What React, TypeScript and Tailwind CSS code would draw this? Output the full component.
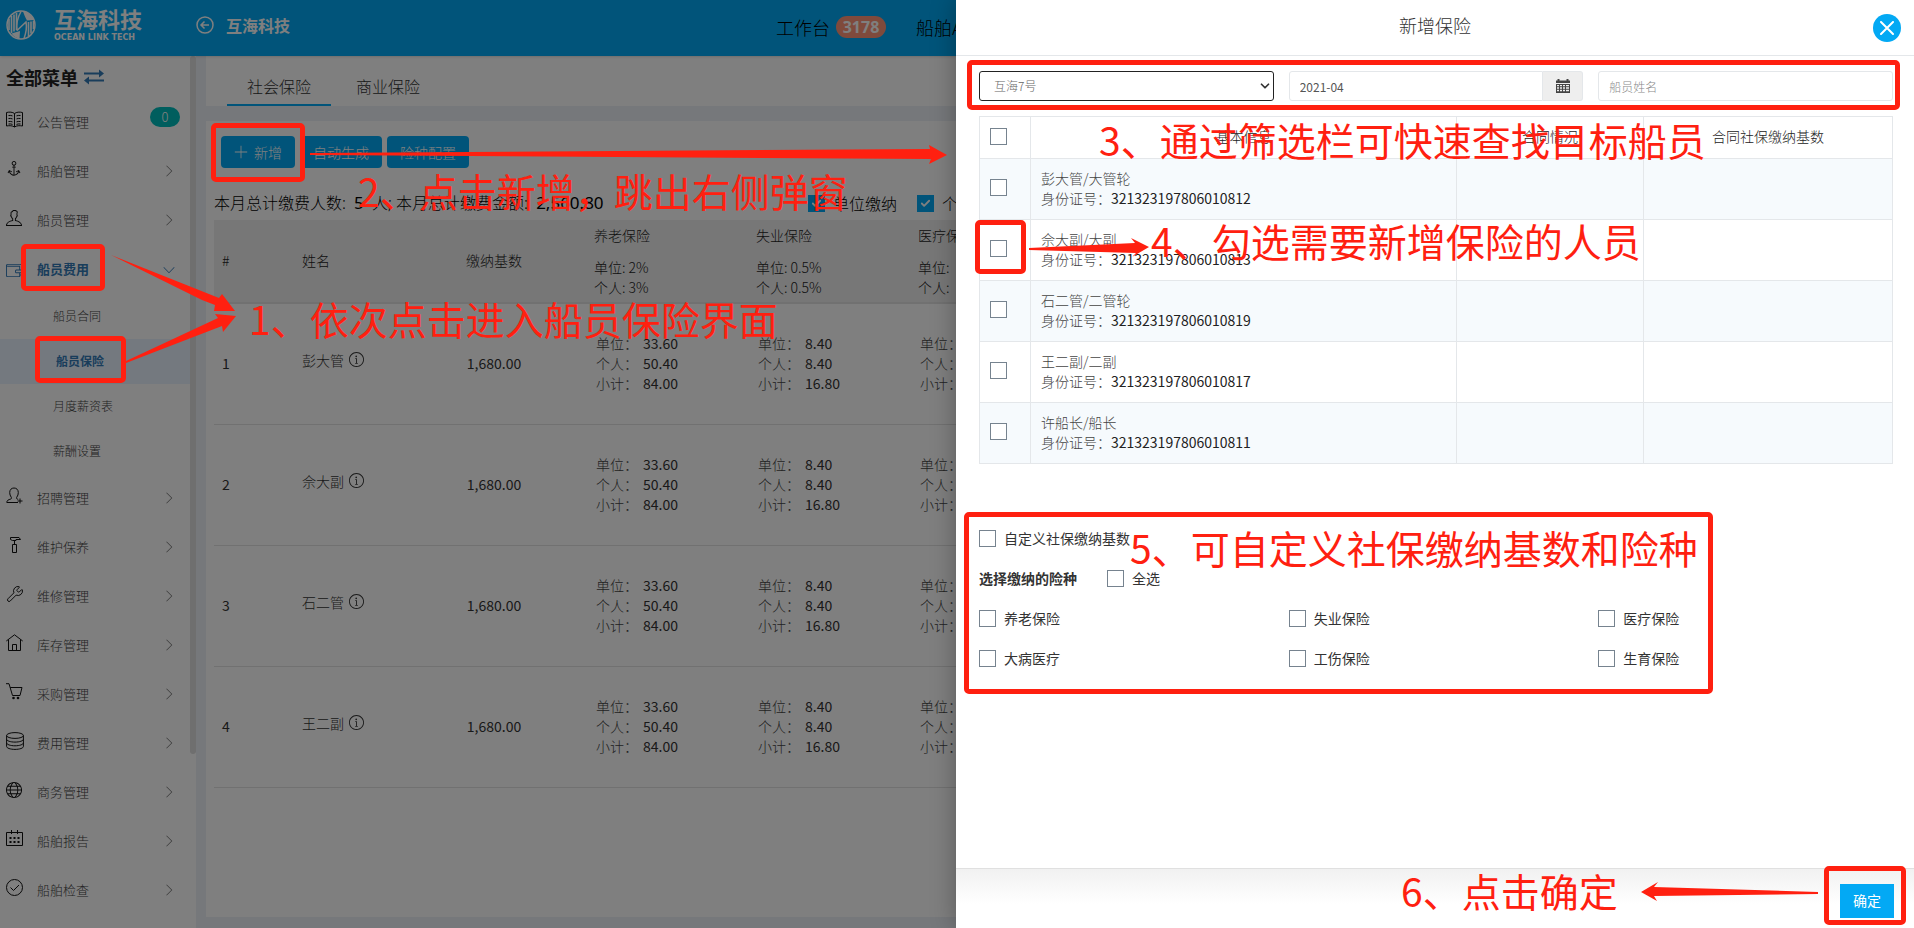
import type { ReactNode } from "react";
import { Check, ChevronDown, Wrench } from "lucide-react";
import {
  TfiAnchor,
  TfiAngleDown,
  TfiAngleRight,
  TfiInfoAlt,
  TfiPlus,
  TfiUser,
  TfiWallet,
  TfiWorld,
} from "react-icons/tfi";

type MenuItem = {
  label: string;
  icon: ReactNode;
  badge?: string;
  active?: boolean;
  children?: { label: string; active?: boolean }[];
};

const LineIcon = ({ d }: { d: string }) => (
  <svg viewBox="0 0 17 17" className="size-[17px]" fill="none" stroke="currentColor">
    <path d={d} />
  </svg>
);

const BookIcon = () => (
  <LineIcon d="M8.500 2.500C6.500 1 3.500.8.5 1.500v13.500c3-.6 6-.4 8 1 2-1.400 5-1.600 8-1V1.500c-3-.7-6-.5-8 1zM8.500 2.500V16M2.500 4.500c1.500-.2 3-.1 4 .4M2.500 7.500c1.500-.2 3-.1 4 .4M2.500 10.500c1.500-.2 3-.1 4 .4M2.500 13c1.500-.2 3-.1 4 .4M14.500 4.500c-1.500-.2-3-.1-4 .4M14.500 7.500c-1.500-.2-3-.1-4 .4M14.500 10.500c-1.500-.2-3-.1-4 .4M14.500 13c-1.500-.2-3-.1-4 .4" />
);

const RecruitIcon = () => (
  <LineIcon d="M9 15.500H.8c0-2.200 1.500-2.700 4-3.500.8-.3.9-1.200.3-2C4.200 8.900 3.700 7.300 3.700 5.500 3.700 2.700 5.500 1 8 1s4.300 1.700 4.300 4.500c0 1.800-.5 3.400-1.400 4.500-.6.800-.5 1.700.3 2l1 .4M9 15.500h3M14 11.500v5M11.500 14h5" />
);

const HammerIcon = () => (
  <LineIcon d="M4.500 1.500h8.500l1.500 2H10v1H6.500l-2-1zM8.500 4.500v4M6.500 8.500h4v8h-4z" />
);

const HomeIcon = () => <LineIcon d="M.3 7L8.500.8 16.700 7M2.500 5.500v11h12v-11M6.500 16.500v-6h4v6" />;

const CartIcon = () => (
  <svg viewBox="0 0 17 17" className="size-[17px]" fill="none" stroke="currentColor">
    <path d="M0 .7h3L6.500 12.500h7.500L16 4.500H4.200" />
    <circle cx="7.500" cy="15" r="1.300" fill="currentColor" stroke="none" />
    <circle cx="12" cy="15" r="1.300" fill="currentColor" stroke="none" />
  </svg>
);

const CalendarIcon = () => (
  <svg viewBox="0 0 17 17" className="size-[17px]" fill="none" stroke="currentColor">
    <path d="M.5 2.500h16v13H.5zM5.500 0v4M11.500 0v4" />
    <path
      d="M3.500 7h2v2h-2zM7.500 7h2v2h-2zM11.500 7h2v2h-2zM3.500 11h2v2h-2zM7.500 11h2v2h-2zM11.500 11h2v2h-2z"
      fill="currentColor"
      stroke="none"
    />
  </svg>
);

const CoinsIcon = () => (
  <svg viewBox="0 0 18 18" className="size-[18px]" fill="none" stroke="currentColor">
    <ellipse cx="9" cy="3.500" rx="8.400" ry="2.900" />
    <path d="M.6 3.500v11c0 1.600 3.800 2.900 8.400 2.900s8.400-1.300 8.400-2.900v-11M.6 7.200c0 1.600 3.800 2.900 8.400 2.900s8.400-1.300 8.400-2.900M.6 10.900c0 1.600 3.800 2.900 8.400 2.900s8.400-1.300 8.400-2.900" />
  </svg>
);

const CheckedIcon = () => (
  <LineIcon d="M8.500.5a8 8 0 1 0 0 16a8 8 0 1 0 0-16zM4.500 8.500l3 3 5.500-5.500" />
);

const SwapIcon = () => (
  <svg viewBox="0 0 20 16" className="h-4 w-5 text-[#337ab7]" fill="currentColor">
    <path d="M0 3.500h15V.5l5 4-5 4v-3H0zM20 10.500H5v-3l-5 4 5 4v-3h15z" />
  </svg>
);

const LogoIcon = () => (
  <svg viewBox="0 0 30 30" className="size-[30px]" fill="none" stroke="white">
    <circle cx="15" cy="15" r="14" strokeWidth="1.500" />
    <path d="M17 1.500c5 .5 9 4 11 8.500l-7 .5C19 7 18 4 17 1.500z" fill="white" stroke="none" />
    <path d="M13.500 28.500c-3-.4-6-2-8-5l8.500-2.500z" fill="white" stroke="none" />
    <path d="M3 9v11M5.500 6v17M8 4.500v17M10.500 3v17" strokeWidth="1.600" />
    <path d="M11 20.500L20 12c1 5 0 11-2 16.500" strokeWidth="1.500" />
    <path d="M22.500 12v14M25 11.500v12M27.500 11v8" strokeWidth="1.600" />
    <path d="M11 20.500c-1-7 0-12 4-19" strokeWidth="1.500" />
  </svg>
);

const menu: MenuItem[] = [
  { label: "公告管理", icon: <BookIcon />, badge: "0" },
  { label: "船舶管理", icon: <TfiAnchor /> },
  { label: "船员管理", icon: <TfiUser /> },
  {
    label: "船员费用",
    icon: <TfiWallet />,
    active: true,
    children: [
      { label: "船员合同" },
      { label: "船员保险", active: true },
      { label: "月度薪资表" },
      { label: "薪酬设置" },
    ],
  },
  { label: "招聘管理", icon: <RecruitIcon /> },
  { label: "维护保养", icon: <HammerIcon /> },
  { label: "维修管理", icon: <Wrench strokeWidth={1.3} className="size-[18px]" /> },
  { label: "库存管理", icon: <HomeIcon /> },
  { label: "采购管理", icon: <CartIcon /> },
  { label: "费用管理", icon: <CoinsIcon /> },
  { label: "商务管理", icon: <TfiWorld /> },
  { label: "船舶报告", icon: <CalendarIcon /> },
  { label: "船舶检查", icon: <CheckedIcon /> },
];

const insurances = [
  { name: "养老保险", unit: "2%", person: "3%", values: ["33.60", "50.40", "84.00"] },
  { name: "失业保险", unit: "0.5%", person: "0.5%", values: ["8.40", "8.40", "16.80"] },
  { name: "医疗保险", unit: "", person: "", values: ["", "", ""] },
];

const payers = ["彭大管", "佘大副", "石二管", "王二副"];

const crew = [
  { name: "彭大管/大管轮", id: "321323197806010812" },
  { name: "佘大副/大副", id: "321323197806010813" },
  { name: "石二管/二管轮", id: "321323197806010819" },
  { name: "王二副/二副", id: "321323197806010817" },
  { name: "许船长/船长", id: "321323197806010811" },
];

const kinds = ["养老保险", "失业保险", "医疗保险", "大病医疗", "工伤保险", "生育保险"];

const boxClass =
  "block size-[17px] shrink-0 appearance-none border border-[#76838f] bg-white checked:border-[#03a9f4] checked:bg-[#03a9f4]";

const TickBox = ({ label }: { label: string }) => (
  <label className="flex h-10 items-center gap-2 text-sm text-[#333]">
    <input type="checkbox" className={boxClass} />
    {label}
  </label>
);

const CheckedBox = ({ label }: { label: string }) => (
  <label className="flex shrink-0 items-center gap-2 text-base font-light text-black">
    <span className="relative">
      <input type="checkbox" defaultChecked className={boxClass} />
      <Check strokeWidth={4} className="absolute top-[3px] left-[3px] size-[11px] text-white" />
    </span>
    {label}
  </label>
);

const Header = () => (
  <header className="relative z-10 flex h-14 shrink-0 items-center bg-[#03a9f4] shadow-sm">
    <div className="flex w-[776px] shrink-0 items-center pb-[6px]">
      <div className="flex w-[196px] items-center gap-[18px] pl-[6px]">
        <LogoIcon />
        <div className="flex flex-col gap-[6px] text-white">
          <span className="text-[22px] leading-5 font-bold">互海科技</span>
          <span className="font-['DejaVu_Sans'] text-[8px] leading-2 font-bold whitespace-nowrap">
            OCEAN LINK TECH
          </span>
        </div>
      </div>
      <button type="button" aria-label="返回" className="text-white">
        <svg viewBox="0 0 18 18" className="size-[18px]" fill="none" stroke="currentColor">
          <circle cx="9" cy="9" r="8" strokeWidth="1.500" />
          <path d="M13 9H5.500M8.500 5.500L5 9l3.500 3.500" strokeWidth="1.500" />
        </svg>
      </button>
      <span className="ml-3 text-base font-bold text-white">互海科技</span>
    </div>
    <nav className="flex shrink-0 items-center pb-[3px] text-lg font-light text-black">
      <a href="#work">工作台</a>
      <span className="ml-[6px] flex h-[22px] w-[50px] items-center justify-center rounded-full bg-[#ff9478] font-['Noto_Sans'] text-base font-bold text-white">
        3178
      </span>
      <a href="#ship" className="ml-[30px]">
        船舶APP
      </a>
    </nav>
  </header>
);

const Sidebar = () => (
  <aside className="flex w-[196px] shrink-0 overflow-hidden bg-white">
    <nav className="min-w-0 flex-1">
      <div className="flex h-[42px] items-center gap-[6px] pl-[6px] text-lg font-bold text-[#222]">
        全部菜单
        <SwapIcon />
      </div>
      {menu.map((item) => (
        <div key={item.label}>
          <a
            href="#menu"
            className={
              item.active
                ? "flex h-[49px] items-center pr-[15px] pl-[6px] text-[13px] font-bold text-[#337ab7]"
                : "flex h-[49px] items-center pr-[15px] pl-[6px] text-[13px] font-light text-[#444]"
            }
          >
            <span
              className={
                item.active
                  ? "flex w-[31px] text-base text-[#337ab7]"
                  : "flex w-[31px] pb-[6px] text-base text-[#111]"
              }
            >
              {item.icon}
            </span>
            <span className="flex-1 pb-[2px]">{item.label}</span>
            {item.badge ? (
              <span className="-mr-[5px] mb-3 flex h-5 w-[30px] items-center justify-center rounded-full bg-[#00bcbc] text-white">
                {item.badge}
              </span>
            ) : item.active ? (
              <TfiAngleDown className="size-3" />
            ) : (
              <TfiAngleRight className="mb-[2px] size-3 text-[#777]" />
            )}
          </a>
          {item.children?.map((child) => (
            <a
              key={child.label}
              href="#submenu"
              className={
                child.active
                  ? "flex h-[45px] items-center bg-[#e9f3ff] pb-[2px] pl-14 text-xs font-bold text-[#337ab7]"
                  : "flex h-[45px] items-center pb-[2px] pl-[53px] text-xs font-light text-[#444]"
              }
            >
              {child.label}
            </a>
          ))}
        </div>
      ))}
    </nav>
    <div className="h-4/5 w-[6px] rounded-full bg-[#dedede]" />
  </aside>
);

const PaymentTable = () => (
  <table className="mt-[7px] w-full table-fixed text-left text-sm text-[#333]">
    <colgroup>
      <col className="w-20" />
      <col className="w-[108px]" />
      <col className="w-[184px]" />
      <col className="w-[162px]" />
      <col className="w-[162px]" />
      <col />
    </colgroup>
    <thead>
      <tr className="h-[83px] border-b-2 border-[#e2e2e2] bg-[#efefef] text-[#222]">
        <th className="px-2 pb-[2px] font-light">#</th>
        <th className="px-2 pb-[2px] font-light">姓名</th>
        <th className="px-2 pb-[2px] text-center font-light">缴纳基数</th>
        {insurances.map((item) => (
          <th key={item.name} className="px-2 align-top leading-5 font-light">
            <div className="mt-[5px] mb-3">{item.name}</div>
            <div>单位: {item.unit}</div>
            <div>个人: {item.person}</div>
          </th>
        ))}
      </tr>
    </thead>
    <tbody>
      {payers.map((name, index) => (
        <tr key={name} className="h-[121px] border-b border-[#e2e2e2]">
          <td className="px-2 pb-[2px]">{index + 1}</td>
          <td className="px-2 font-light">
            <span className="flex items-center gap-[5px] pb-2">
              {name}
              <TfiInfoAlt className="size-[15px]" />
            </span>
          </td>
          <td className="px-2 pb-[2px] text-center">1,680.00</td>
          {insurances.map((item) => (
            <td key={item.name} className="px-[10px] pb-[2px] leading-5">
              {["单位", "个人", "小计"].map((label, row) => (
                <div key={label} className="flex">
                  <span className="w-[47px] font-light text-[#444]">{label}：</span>
                  {item.values[row]}
                </div>
              ))}
            </td>
          ))}
        </tr>
      ))}
    </tbody>
  </table>
);

const actionClass =
  "flex h-8 items-center gap-[6px] rounded bg-[#03a9f4] px-[13px] text-sm font-light text-white";

const Content = () => (
  <main className="flex min-w-0 flex-1 flex-col bg-[#edf0f6] pb-[11px] pl-[10px]">
    <div className="flex h-[50px] shrink-0 gap-[5px] bg-white pl-[21px] text-base font-light text-[#333]">
      <a href="#social" className="flex items-center border-b-2 border-[#03a9f4] px-5 pt-3">
        社会保险
      </a>
      <a href="#commercial" className="flex items-center border-b-2 border-transparent px-5 pt-3">
        商业保险
      </a>
    </div>
    <section className="mt-[15px] flex-1 bg-white px-2 pt-[15px]">
      <div className="flex gap-[5px] pl-[7px]">
        <button type="button" className={actionClass}>
          <TfiPlus className="size-[14px]" />
          新增
        </button>
        <button type="button" className={actionClass}>
          自动生成
        </button>
        <button type="button" className={actionClass}>
          险种配置
        </button>
      </div>
      <div className="mt-[25px] flex h-5 items-center text-base text-black">
        <p className="w-[594px] shrink-0 font-['Noto_Sans','Noto_Sans_CJK_SC',sans-serif] font-light whitespace-nowrap">
          本月总计缴费人数: <b className="mx-1 text-[17px]">5</b> 人; 本月总计缴费金额:{" "}
          <b className="mx-1 text-[17px]">2,560.80</b>
        </p>
        <div className="flex shrink-0 gap-5">
          <CheckedBox label="单位缴纳" />
          <CheckedBox label="个人缴纳" />
        </div>
      </div>
      <PaymentTable />
    </section>
  </main>
);

const fieldClass = "h-[30px] w-full min-w-0 rounded-[3px] border bg-white text-xs";
const cellClass = "border border-[#e4e7ea] px-[10px]";

const Drawer = () => (
  <div
    role="dialog"
    aria-labelledby="drawer-title"
    className="absolute inset-y-0 right-0 z-30 flex w-[calc(50%+1px)] flex-col bg-white shadow-[0_0_24px_rgba(0,0,0,0.3)]"
  >
    <div className="relative flex h-14 shrink-0 items-center justify-center border-b border-[#e4e7ea] pb-[6px]">
      <h2 id="drawer-title" className="text-lg font-light text-[#333]">
        新增保险
      </h2>
      <button
        type="button"
        aria-label="关闭"
        className="absolute top-[14px] right-[13px] flex size-7 items-center justify-center rounded-full bg-[#03a9f4] text-white"
      >
        <svg viewBox="0 0 14 14" className="size-[14px]" stroke="currentColor" strokeWidth="2" strokeLinecap="round">
          <path d="M1 1l12 12M13 1L1 13" />
        </svg>
      </button>
    </div>

    <div className="flex-1 pt-[15px] pr-[21px] pl-[23px]">
      <div className="grid grid-cols-3 gap-[15px]">
        <div className="relative">
          <select
            aria-label="船舶"
            className={`${fieldClass} appearance-none border-[#222] pl-[14px] font-light text-[#666]`}
          >
            <option>互海7号</option>
          </select>
          <ChevronDown
            strokeWidth={3}
            className="pointer-events-none absolute top-2 right-[2px] size-[14px] text-[#333]"
          />
        </div>
        <div className="flex">
          <input
            aria-label="月份"
            defaultValue="2021-04"
            className={`${fieldClass} rounded-r-none border-[#e4e7ea] px-[10px] text-[#555]`}
          />
          <button
            type="button"
            aria-label="选择月份"
            className="flex w-10 shrink-0 items-center justify-center rounded-r-[3px] border border-l-0 border-[#e4e7ea] bg-[#eee]"
          >
            <svg viewBox="0 0 14 14" className="size-[14px]" fill="#444">
              <path d="M0 1.500h1.500V0h2v1.500h7V0h2v1.500H14V4H0z" />
              <path
                d="M0 5h14v9H0zM1 6v1.300h2V6zm3 0v1.300h2V6zm3 0v1.300h2V6zm3 0v1.300h3V6zM1 8.300v1.400h2V8.300zm3 0v1.400h2V8.300zm3 0v1.400h2V8.300zm3 0v1.400h3V8.300zM1 10.800v1.400h2v-1.400zm3 0v1.400h2v-1.400zm3 0v1.400h2v-1.400zm3 0v1.400h3v-1.400z"
                fillRule="evenodd"
              />
            </svg>
          </button>
        </div>
        <input
          aria-label="船员姓名"
          placeholder="船员姓名"
          className={`${fieldClass} border-[#e4e7ea] px-[10px] placeholder:font-light placeholder:text-[#888]`}
        />
      </div>

      <table className="mt-[15px] w-full table-fixed border-collapse text-sm text-[#444]">
        <colgroup>
          <col className="w-[51px]" />
          <col />
          <col className="w-[187px]" />
          <col className="w-[249px]" />
        </colgroup>
        <thead>
          <tr className="h-[42px] text-[#222]">
            <th className={`${cellClass} pb-[2px]`}>
              <input type="checkbox" aria-label="全部船员" className={boxClass} />
            </th>
            <th className={`${cellClass} pb-1 font-light`}>基本信息</th>
            <th className={`${cellClass} pb-1 font-light`}>合同情况</th>
            <th className={`${cellClass} pb-1 font-light`}>合同社保缴纳基数</th>
          </tr>
        </thead>
        <tbody>
          {crew.map((person) => (
            <tr key={person.id} className="h-[61px] odd:bg-[#f6fafd]">
              <td className={`${cellClass} pb-1`}>
                <input type="checkbox" aria-label={person.name} className={boxClass} />
              </td>
              <td className={`${cellClass} pb-[2px] leading-5`}>
                <div className="font-light">{person.name}</div>
                <div>
                  <span className="font-light">身份证号：</span>
                  <span className="text-[#222]">{person.id}</span>
                </div>
              </td>
              <td className={cellClass} />
              <td className={cellClass} />
            </tr>
          ))}
        </tbody>
      </table>

      <div className="mt-[54px]">
        <TickBox label="自定义社保缴纳基数" />
        <div className="flex items-center gap-[30px]">
          <span className="text-sm font-bold text-[#333]">选择缴纳的险种</span>
          <TickBox label="全选" />
        </div>
        <div className="grid grid-cols-3 gap-x-[15px]">
          {kinds.map((kind) => (
            <TickBox key={kind} label={kind} />
          ))}
        </div>
      </div>
    </div>

    <div className="flex h-[60px] shrink-0 items-center justify-end border-t border-[#e0e0e0] bg-linear-to-b from-[#f1f1f1] to-white to-60% pt-[5px] pr-5">
      <button type="button" className="h-[34px] bg-[#03a9f4] px-[13px] pb-[2px] text-sm text-white">
        确定
      </button>
    </div>
  </div>
);

// Guide marks drawn over the page: frames, arrows and numbered steps
const frames = [
  "top-[123px] left-[211px] h-[59px] w-[94px]",
  "top-[244px] left-[21px] h-[47px] w-[84px]",
  "top-[336px] left-[35px] h-[47px] w-[91px]",
  "top-[60px] left-[967px] h-[50px] w-[933px]",
  "top-[220px] left-[975px] h-[54px] w-[51px]",
  "top-[512px] left-[964px] h-[182px] w-[749px]",
  "top-[866px] left-[1824px] h-[59px] w-[82px]",
];

const steps = [
  { text: "1、依次点击进入船员保险界面", place: "top-[298px] left-[249px]" },
  { text: "2、点击新增，跳出右侧弹窗", place: "top-[170px] left-[358px]" },
  { text: "3、通过筛选栏可快速查找目标船员", place: "top-[119px] left-[1099px]" },
  { text: "4、勾选需要新增保险的人员", place: "top-[220px] left-[1151px]" },
  { text: "5、可自定义社保缴纳基数和险种", place: "top-[527px] left-[1130px]" },
  { text: "6、点击确定", place: "top-[870px] left-[1401px]" },
];

const GuideMarks = () => (
  <div className="pointer-events-none absolute inset-0 z-40 overflow-hidden">
    <svg className="absolute top-0 left-0 h-[928px] w-[1914px]" viewBox="0 0 1914 928" fill="#ff2010">
      <path d="M111 255L219 298L222 294L235 311L214 311L215 305L202 300Z" />
      <path d="M126 361L218 318L215 314L236 316L223 332L222 326L126 363Z" />
      <path d="M310 153L930 149L929 145L947 155L929 164L931 159L310 155Z" />
      <path d="M1029 248L1135 243L1131 238L1149 247L1132 257L1136 253L1029 250Z" />
      <path d="M1818 892L1654 887L1658 882L1641 892L1657 901L1654 896L1818 894Z" />
    </svg>
    {frames.map((place) => (
      <div key={place} className={`absolute rounded-[5px] border-5 border-[#ff2010] ${place}`} />
    ))}
    {steps.map((step) => (
      <p
        key={step.text}
        className={`absolute text-[39px] leading-10 whitespace-nowrap text-[#ff2010] ${step.place}`}
      >
        {step.text}
      </p>
    ))}
  </div>
);

const App = () => {
  return (
    <div className="relative flex h-screen flex-col overflow-hidden font-['Noto_Sans_CJK_SC',sans-serif]">
      <Header />
      <div className="flex min-h-0 flex-1">
        <Sidebar />
        <Content />
      </div>
      <div className="absolute inset-0 z-20 bg-black/50" />
      <Drawer />
      <GuideMarks />
    </div>
  );
};

export default App;
